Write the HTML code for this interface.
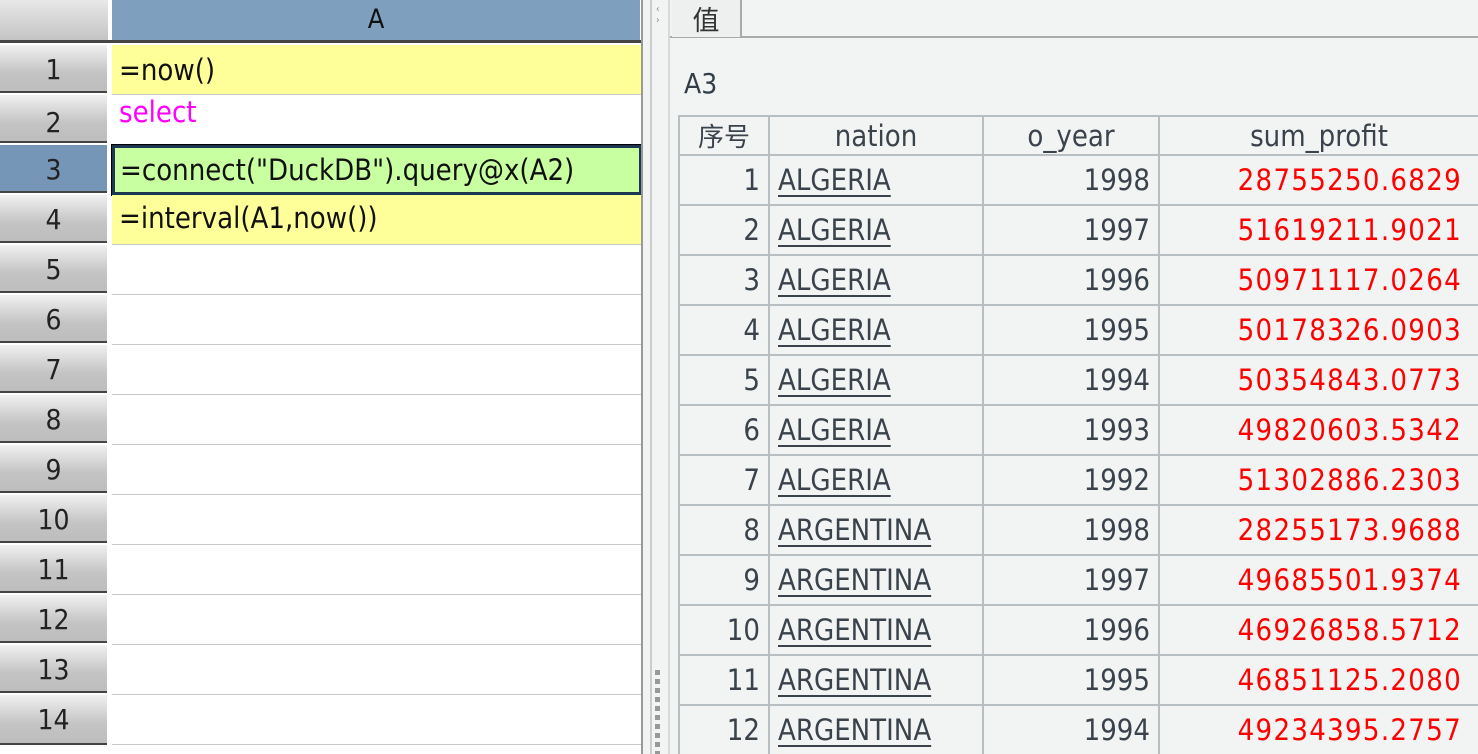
<!DOCTYPE html><html><head><meta charset="utf-8"><style>
*{margin:0;padding:0;box-sizing:border-box}
html,body{width:1478px;height:754px;overflow:hidden}
body{background:#fff;font-family:"DejaVu Sans Condensed","Liberation Sans","Noto Sans CJK SC",sans-serif;position:relative}
.abs{position:absolute}
.rh{position:absolute;left:0;width:107px;height:48px;background:linear-gradient(#f0f0f0,#c4c4c4 60%,#bdbdbd);border-bottom:2px solid #444;text-align:center;font-size:28px;line-height:50px;color:#222}
.cell{position:absolute;left:112px;width:530px;height:50px;border-bottom:1px solid #c8c8c8;font-size:29px;line-height:50px;padding-left:7px;color:#111}
.tb{position:absolute;left:678px;border-collapse:collapse;top:115px;font-size:29px;color:#3a424c;table-layout:fixed;width:800px}
.tb td,.tb th{border:2px solid #b8bfc2;height:50px;font-weight:normal;padding:0 8px;white-space:nowrap;overflow:hidden}
.tb th{height:37px}
.r{text-align:right}
.red{color:#f00;letter-spacing:1.3px;padding-right:16px!important}
u{text-decoration:underline;text-underline-offset:5px}
</style></head><body>
<div class="abs" style="left:0;top:0;width:108px;height:40px;background:linear-gradient(#e8e8e8,#c4c4c4)"></div>
<div class="abs" style="left:108px;top:0;width:4px;height:754px;background:#fff"></div>
<div class="abs" style="left:112px;top:0;width:528px;height:40px;background:#7f9fbe;text-align:center;font-size:27px;line-height:40px;color:#111">A</div>
<div class="abs" style="left:0;top:40px;width:642px;height:3px;background:#444"></div>
<div class="rh" style="top:45px">1</div>
<div class="rh" style="top:95px;line-height:56px">2</div>
<div class="rh" style="top:145px;background:#7696b8">3</div>
<div class="rh" style="top:195px">4</div>
<div class="rh" style="top:245px">5</div>
<div class="rh" style="top:295px">6</div>
<div class="rh" style="top:345px">7</div>
<div class="rh" style="top:395px">8</div>
<div class="rh" style="top:445px">9</div>
<div class="rh" style="top:495px">10</div>
<div class="rh" style="top:545px">11</div>
<div class="rh" style="top:595px">12</div>
<div class="rh" style="top:645px">13</div>
<div class="rh" style="top:695px;height:50px">14</div>
<div class="cell" style="top:45px;background:#ffff99">=now()</div>
<div class="cell" style="top:95px;color:#f0f;line-height:34px">select</div>
<div class="cell" style="top:145px;background:#c8ffa0;border:3px solid #1c3550;outline:1px solid #000;line-height:44px;padding-left:5px">=connect("DuckDB").query@x(A2)</div>
<div class="cell" style="top:195px;background:#ffff99;line-height:46px">=interval(A1,now())</div>
<div class="cell" style="top:245px"></div><div class="cell" style="top:295px"></div><div class="cell" style="top:345px"></div><div class="cell" style="top:395px"></div><div class="cell" style="top:445px"></div><div class="cell" style="top:495px"></div><div class="cell" style="top:545px"></div><div class="cell" style="top:595px"></div><div class="cell" style="top:645px"></div><div class="cell" style="top:695px"></div>
<div class="abs" style="left:641px;top:0;width:2px;height:754px;background:#999"></div>
<div class="abs" style="left:643px;top:0;width:835px;height:754px;background:#f2f4f4"></div>
<div class="abs" style="left:650px;top:0;width:2px;height:754px;background:#ccc"></div>
<div class="abs" style="left:655px;top:670px;width:5px;height:84px;background:repeating-linear-gradient(#999 0 5px,transparent 5px 9px)"></div>
<div class="abs" style="left:656px;top:4px;font-size:10px;color:#888">‹<br>›</div>
<div class="abs" style="left:668px;top:36px;width:810px;height:2px;background:#aaa"></div>
<div class="abs" style="left:668px;top:0;width:2px;height:754px;background:#d8dada"></div>
<div class="abs" style="left:672px;top:0;width:70px;height:37px;border-right:2px solid #aaa;background:#eef0f0;font-size:27px;line-height:38px;text-align:center;color:#333;font-family:'Noto Sans CJK SC',sans-serif">值</div>
<div class="abs" style="left:684px;top:67px;font-size:28px;color:#333d47">A3</div>
<table class="tb">
<colgroup><col style="width:90px"><col style="width:214px"><col style="width:176px"><col style="width:320px"></colgroup>
<tr><th style="font-family:'Noto Sans CJK SC',sans-serif;font-size:26px">序号</th><th>nation</th><th>o_year</th><th>sum_profit</th></tr>
<tr><td class="r">1</td><td><u>ALGERIA</u></td><td class="r">1998</td><td class="r red">28755250.6829</td></tr>
<tr><td class="r">2</td><td><u>ALGERIA</u></td><td class="r">1997</td><td class="r red">51619211.9021</td></tr>
<tr><td class="r">3</td><td><u>ALGERIA</u></td><td class="r">1996</td><td class="r red">50971117.0264</td></tr>
<tr><td class="r">4</td><td><u>ALGERIA</u></td><td class="r">1995</td><td class="r red">50178326.0903</td></tr>
<tr><td class="r">5</td><td><u>ALGERIA</u></td><td class="r">1994</td><td class="r red">50354843.0773</td></tr>
<tr><td class="r">6</td><td><u>ALGERIA</u></td><td class="r">1993</td><td class="r red">49820603.5342</td></tr>
<tr><td class="r">7</td><td><u>ALGERIA</u></td><td class="r">1992</td><td class="r red">51302886.2303</td></tr>
<tr><td class="r">8</td><td><u>ARGENTINA</u></td><td class="r">1998</td><td class="r red">28255173.9688</td></tr>
<tr><td class="r">9</td><td><u>ARGENTINA</u></td><td class="r">1997</td><td class="r red">49685501.9374</td></tr>
<tr><td class="r">10</td><td><u>ARGENTINA</u></td><td class="r">1996</td><td class="r red">46926858.5712</td></tr>
<tr><td class="r">11</td><td><u>ARGENTINA</u></td><td class="r">1995</td><td class="r red">46851125.2080</td></tr>
<tr><td class="r">12</td><td><u>ARGENTINA</u></td><td class="r">1994</td><td class="r red">49234395.2757</td></tr>
</table>
</body></html>
